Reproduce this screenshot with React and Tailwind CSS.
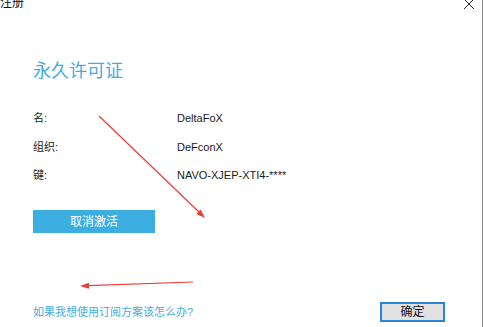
export default function App() {
  const font = { fontFamily: '"Liberation Sans", "Noto Sans CJK SC", sans-serif' };
  return (
    <div className="relative w-[485px] h-[327px] bg-white overflow-hidden flex" style={font}>
      <div className="w-[483px] h-full flex flex-col border-r border-[#8c8c8c]">
        <div className="h-[16px] flex justify-between items-start">
          <span className="text-[12px] leading-[12px] -mt-[3px] text-[#111]">注册</span>
          <svg width="12" height="12" viewBox="0 0 12 12" className="mr-[7px] -mt-[2px]">
            <path d="M1 1 L11 11 M11 1 L1 11" stroke="#222" strokeWidth="1" fill="none" />
          </svg>
        </div>
        <div className="pl-[33px] mt-[43px] text-[18px] leading-[24px] text-[#45addd]">永久许可证</div>
        <div className="pl-[33px] mt-[21px] flex flex-col text-[11px] text-[#1a1a1a]">
          <div className="h-[29px] flex items-center">
            <span className="w-[144px]">名:</span>
            <span>DeltaFoX</span>
          </div>
          <div className="h-[28px] flex items-center">
            <span className="w-[144px]">组织:</span>
            <span>DeFconX</span>
          </div>
          <div className="h-[29px] flex items-center">
            <span className="w-[144px]">键:</span>
            <span>NAVO-XJEP-XTI4-****</span>
          </div>
        </div>
        <div className="pl-[33px] mt-[20px]">
          <div className="w-[122px] h-[23px] bg-[#3caedf] text-white text-[12px] flex items-center justify-center">
            取消激活
          </div>
        </div>
        <div className="flex-1" />
        <div className="pl-[33px] pr-[37px] pb-[5px] flex items-center justify-between">
          <span className="text-[11px] text-[#45addd]">如果我想使用订阅方案该怎么办?</span>
          <div className="w-[65px] h-[20px] border-2 border-[#2b86d9] bg-[#e1e1e1] text-[12px] text-[#111] flex items-center justify-center">
            确定
          </div>
        </div>
      </div>
      <svg className="absolute inset-0 pointer-events-none" width="485" height="327">
        <line x1="99" y1="116" x2="199" y2="212" stroke="#f03a3a" strokeWidth="1.2" />
        <polygon points="205,218 196.4,213.9 200.6,209.6" fill="#f03a3a" />
        <line x1="193" y1="282" x2="88" y2="285.7" stroke="#f03a3a" strokeWidth="1.2" />
        <polygon points="80,286 89.1,288.7 88.9,282.7" fill="#f03a3a" />
      </svg>
    </div>
  );
}
